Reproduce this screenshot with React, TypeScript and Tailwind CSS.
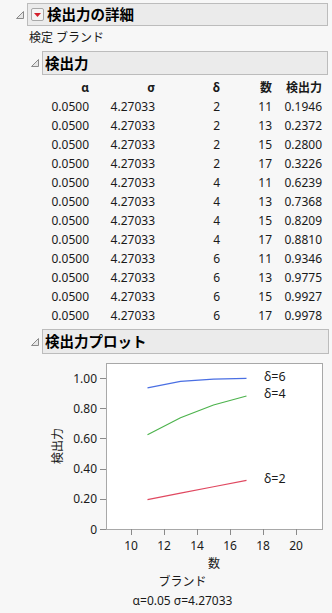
const FONT = "font-['Noto_Sans','Noto_Sans_CJK_JP',sans-serif]";

const rows: [string, string, number, number, string][] = [
  ['0.0500', '4.27033', 2, 11, '0.1946'],
  ['0.0500', '4.27033', 2, 13, '0.2372'],
  ['0.0500', '4.27033', 2, 15, '0.2800'],
  ['0.0500', '4.27033', 2, 17, '0.3226'],
  ['0.0500', '4.27033', 4, 11, '0.6239'],
  ['0.0500', '4.27033', 4, 13, '0.7368'],
  ['0.0500', '4.27033', 4, 15, '0.8209'],
  ['0.0500', '4.27033', 4, 17, '0.8810'],
  ['0.0500', '4.27033', 6, 11, '0.9346'],
  ['0.0500', '4.27033', 6, 13, '0.9775'],
  ['0.0500', '4.27033', 6, 15, '0.9927'],
  ['0.0500', '4.27033', 6, 17, '0.9978'],
];

const series = [
  { delta: 6, color: '#4a6fe3', labelY: 22 },
  { delta: 4, color: '#4db34d', labelY: 39 },
  { delta: 2, color: '#e04860', labelY: 124 },
];

// plot geometry (svg coords, svg top = page y 354)
const px = (n: number) => 131 + (n - 10) * 16.5;
const py = (v: number) => 175 - v * 151;

function Disclosure() {
  return (
    <svg width="8" height="8" viewBox="0 0 8 8" className="shrink-0">
      <polygon points="7.5,0.5 7.5,7.5 0.5,7.5" fill="#e6e6e6" stroke="#8a8a8a" strokeWidth="1" />
    </svg>
  );
}

function MenuButton() {
  return (
    <span className="w-[13px] h-[13px] shrink-0 rounded-[2px] border border-[#a8a8a8] bg-[#f4f4f4] flex items-center justify-center">
      <svg width="7" height="4" viewBox="0 0 7 4">
        <polygon points="0,0 7,0 3.5,4" fill="#d4202c" />
      </svg>
    </span>
  );
}

function PowerPlot() {
  const yTicks = [0, 0.2, 0.4, 0.6, 0.8, 1.0];
  const xTicks = [10, 12, 14, 16, 18, 20];
  return (
    <svg width="332" height="218" viewBox="0 0 332 218" className="block">
      <rect x="106.5" y="9.5" width="216" height="166" fill="#ffffff" stroke="#a8a8a8" />
      {yTicks.map((v) => (
        <g key={v}>
          <line x1="100" x2="106" y1={Math.round(py(v)) + 0.5} y2={Math.round(py(v)) + 0.5} stroke="#8a8a8a" />
          <text x="97" y={py(v)} textAnchor="end" dominantBaseline="central" fontSize="12" fill="#1a1a1a">
            {v === 0 ? '0' : v.toFixed(2)}
          </text>
        </g>
      ))}
      {xTicks.map((n) => (
        <g key={n}>
          <line x1={Math.round(px(n)) + 0.5} x2={Math.round(px(n)) + 0.5} y1="175" y2="181" stroke="#8a8a8a" />
          <text x={px(n)} y="191" textAnchor="middle" dominantBaseline="central" fontSize="12" fill="#1a1a1a">
            {n}
          </text>
        </g>
      ))}
      {series.map((s) => {
        const pts = rows
          .filter((r) => r[2] === s.delta)
          .map((r) => `${px(r[3])},${py(parseFloat(r[4]))}`)
          .join(' ');
        return (
          <g key={s.delta}>
            <polyline points={pts} fill="none" stroke={s.color} strokeWidth="1.2" />
            <text x="264" y={s.labelY} dominantBaseline="central" fontSize="12.5" fill="#1a1a1a">
              δ={s.delta}
            </text>
          </g>
        );
      })}
      <text x="214" y="209" textAnchor="middle" dominantBaseline="central" fontSize="12" fill="#1a1a1a">
        数
      </text>
      <text
        x="57"
        y="92"
        textAnchor="middle"
        dominantBaseline="central"
        fontSize="12"
        fill="#1a1a1a"
        transform="rotate(-90 57 92)"
      >
        検出力
      </text>
    </svg>
  );
}

export default function App() {
  return (
    <div className={`${FONT} bg-[#f7f7f7] w-[332px] h-[613px] overflow-hidden pt-[3px] text-[#1a1a1a]`}>
      {/* 検出力の詳細 */}
      <div className="flex items-center gap-[3px] pl-[16px]">
        <Disclosure />
        <div className="ml-[0px] w-[301px] h-[23px] bg-[#ebebeb] border border-[#bcbcbc] flex items-center gap-[3px] pl-[3px]">
          <MenuButton />
          <span className="text-[14.5px] font-bold text-black leading-none">検出力の詳細</span>
        </div>
      </div>
      <p className="pl-[29px] mt-[4px] text-[12px] leading-[16px]">検定 ブランド</p>

      {/* 検出力 */}
      <div className="flex items-center gap-[3px] pl-[31px] mt-[5px]">
        <Disclosure />
        <div className="w-[286px] h-[24px] bg-[#ebebeb] border border-[#bcbcbc] flex items-center pl-[2px]">
          <span className="text-[14.5px] font-bold text-black leading-none">検出力</span>
        </div>
      </div>

      <div className="pl-[41px] pt-[3px] text-[12px] leading-[19px]">
        <div className="grid grid-cols-[48px_66px_65px_52px_50px] text-right font-bold">
          <span>α</span>
          <span>σ</span>
          <span>δ</span>
          <span>数</span>
          <span>検出力</span>
        </div>
        {rows.map((r, i) => (
          <div key={i} className="grid grid-cols-[48px_66px_65px_52px_50px] text-right">
            <span>{r[0]}</span>
            <span>{r[1]}</span>
            <span>{r[2]}</span>
            <span>{r[3]}</span>
            <span>{r[4]}</span>
          </div>
        ))}
      </div>

      {/* 検出力プロット */}
      <div className="flex items-center gap-[3px] pl-[31px] mt-[4px]">
        <Disclosure />
        <div className="w-[287px] h-[25px] bg-[#ebebeb] border border-[#bcbcbc] flex items-center pl-[2px]">
          <span className="text-[14.5px] font-bold text-black leading-none">検出力プロット</span>
        </div>
      </div>

      <PowerPlot />

      <div className="ml-[41px] w-[283px] text-center text-[12px] leading-[19px]">
        <p>ブランド</p>
        <p>α=0.05 σ=4.27033</p>
      </div>
    </div>
  );
}
